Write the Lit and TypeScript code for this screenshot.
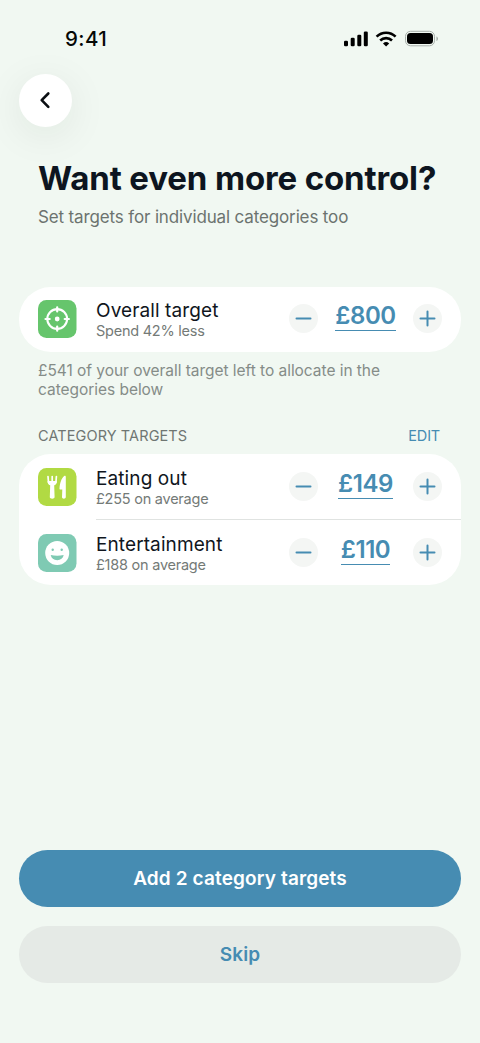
import { LitElement, html, css, svg } from "lit";
import { customElement, property } from "lit/decorators.js";

const targetIcon = svg`
  <g fill="none" stroke="#fff" stroke-linecap="round">
    <circle cx="19.2" cy="19" r="9.9" stroke-width="2.1"/>
    <path stroke-width="2.2" d="M19.2 7.3v4.2M19.2 26.5v4.2M7.5 19h4.2M26.7 19h4.2"/>
  </g>
  <circle cx="19.2" cy="19" r="2.4" fill="#fff"/>`;

const cutleryIcon = svg`
  <path fill="none" stroke="#fff" stroke-width="1.7" stroke-linecap="round" d="M10 8.5l.5 6M14.200 8.500v6M18.400 8.500l-.5 6"/>
  <path fill="#fff" d="M9.600 13h9.200l-.1 1.200c-.2 1.700-1.200 2.700-2.500 3.100l.4 11.700c.1 2.200-4.900 2.200-4.800 0l.4-11.700c-1.300-.4-2.300-1.400-2.500-3.100z"/>
  <path fill="#fff" d="M26.200 7.900c.8-.5 1.600-.1 1.600.9V29.100c0 2.100-3.900 2.100-3.800 0l.3-7.600h-1.700c-.9 0-1.200-.5-1.100-1.300.4-5 1.800-10 4.700-12.300z"/>`;

const smileIcon = svg`
  <circle cx="19.2" cy="19" r="12" fill="#fff"/>
  <circle cx="14.7" cy="15.7" r="1.2" fill="#7fcab3"/>
  <circle cx="23.700" cy="15.700" r="1.200" fill="#7fcab3"/>
  <path fill="#7fcab3" d="M12.700 21.100c4.300.8 8.700.8 13 0-.6 3.300-3.100 5.200-6.500 5.200s-5.900-1.900-6.500-5.200z"/>`;

const icons: Record<string, { art: unknown; fill: string }> = {
  target: { art: targetIcon, fill: "#66c56c" },
  eating: { art: cutleryIcon, fill: "#b1da43" },
  fun: { art: smileIcon, fill: "#7fcab3" },
};

@customElement("target-row")
class TargetRow extends LitElement {
  @property() icon = "target";
  @property() name = "";
  @property() detail = "";
  @property() amount = "";

  static styles = css`
    :host { display: grid; grid-template-columns: 58px 1fr 153px; height: 65px; padding: 0 19px; box-sizing: border-box; }
    .icon { width: 38.5px; height: 38px; margin-top: 13px; display: block; }
    .copy { padding-top: 12px; }
    .name { font-size: 19px; line-height: 24px; color: #10161d; white-space: nowrap; letter-spacing: .1px; }
    .detail { font-size: 14.5px; line-height: 15.5px; color: #747a77; white-space: nowrap; letter-spacing: -.24px; }
    .stepper { display: grid; grid-template-columns: 29px 1fr 29px; }
    .round { width: 29px; height: 29px; margin-top: 17px; border: 0; padding: 0; border-radius: 50%; background: #f4f6f4; display: block; }
    .round svg { display: block; }
    .value { justify-self: center; align-self: start; margin-top: 14px; height: 29px; line-height: 29px; border-bottom: 1.5px solid #468cb2; color: #468cb2; font-size: 24px; font-weight: 600; letter-spacing: -.4px; }
  `;

  render() {
    const i = icons[this.icon];
    const sign = (d: string) => html`<button class="round"><svg width="29" height="29" viewBox="0 0 29 29"><path d=${d} stroke="#468cb2" stroke-width="2" stroke-linecap="round"/></svg></button>`;
    return html`
      <svg class="icon" viewBox="0 0 38.5 38"><rect width="38.5" height="38" rx="8.5" fill=${i.fill}/>${i.art}</svg>
      <div class="copy">
        <div class="name">${this.name}</div>
        <div class="detail">${this.detail}</div>
      </div>
      <div class="stepper">
        ${sign("M7.5 14.5h14")}
        <span class="value">${this.amount}</span>
        ${sign("M7.5 14.5h14M14.5 7.5v14")}
      </div>`;
  }
}

@customElement("app-root")
class AppRoot extends LitElement {
  static styles = css`
    :host { display: flex; flex-direction: column; height: 1043px; box-sizing: border-box; padding: 0 19px 60px; background: #f1f8f2; font-family: Inter, "Liberation Sans", sans-serif; overflow: hidden; }
    .status { display: flex; justify-content: space-between; align-items: center; height: 74px; padding: 3px 22px 0 46px; box-sizing: border-box; }
    .time { font-size: 20.5px; font-weight: 500; letter-spacing: .4px; color: #050806; }
    .back { width: 53px; height: 53px; border: 0; padding: 0; border-radius: 50%; background: #fff; box-shadow: 0 8px 40px rgba(20, 40, 30, .08); flex: none; }
    .back svg { display: block; }
    h1 { margin: 30px 0 0 19px; font-size: 33px; line-height: 42px; font-weight: 700; letter-spacing: -.13px; color: #0d1520; white-space: nowrap; }
    .lead { margin: 7px 0 0 19px; font-size: 17px; line-height: 22px; letter-spacing: -.14px; color: #6c736f; white-space: nowrap; }
    .card { background: #fff; border-radius: 32px; overflow: hidden; }
    .overall { margin-top: 59px; }
    .note { margin: 9px 0 0 19px; font-size: 15.5px; line-height: 19.3px; letter-spacing: -.04px; color: #858c88; white-space: nowrap; }
    .heading { display: flex; justify-content: space-between; margin: 26px 21px 0 19px; font-size: 14.5px; line-height: 20px; letter-spacing: .1px; color: #6f7672; }
    .edit { color: #468cb2; letter-spacing: -.2px; }
    .list { margin-top: 8.5px; padding-top: 1px; }
    .list .first { height: 64px; }
    .rule { height: 1px; margin-left: 77px; background: #e0e3e1; }
    .list .last { height: 65px; padding-top: 1px; }
    .actions { margin-top: auto; display: grid; gap: 19px; }
    .action { height: 57px; border: 0; border-radius: 28.5px; font: 600 19px/57px Inter, "Liberation Sans", sans-serif; letter-spacing: .13px; padding: 0; background: #468cb2; color: #fff; }
    .action.skip { background: #e5eae6; color: #468cb2; }
  `;

  render() {
    return html`
      <div class="status">
        <span class="time">9:41</span>
        <svg width="96" height="18" viewBox="0 0 96 18">
          <rect x="1" y="10.7" width="4" height="5.5" rx="1.3"/>
          <rect x="7.7" y="7.7" width="4" height="8.5" rx="1.3"/>
          <rect x="14.3" y="4.7" width="4" height="11.5" rx="1.3"/>
          <rect x="20.8" y="1.5" width="4" height="14.7" rx="1.3"/>
          <g fill="none" stroke="#000" stroke-width="2.6">
            <path d="M33.6 6.600a13.500 13.500 0 0 1 19 0"/>
            <path d="M37.200 10.500a8.400 8.400 0 0 1 11.800 0"/>
          </g>
          <path d="M43.100 16.600l-3.100-3.100a4.500 4.500 0 0 1 6.200 0z"/>
          <rect x="62.500" y="1.300" width="29" height="14.500" rx="5" fill="none" stroke="#a9b0ab"/>
          <rect x="64" y="3" width="26" height="11" rx="3.500"/>
          <path d="M93.500 6.500v4.500c1.900-.7 1.900-3.800 0-4.500z" fill="#a0a7a2"/>
        </svg>
      </div>
      <button class="back" aria-label="Back">
        <svg width="53" height="53" viewBox="0 0 53 53"><path d="M29.300 19.500L22.700 26.200l6.600 6.700" fill="none" stroke="#0b0f12" stroke-width="2.600" stroke-linecap="round" stroke-linejoin="round"/></svg>
      </button>
      <h1>Want even more control?</h1>
      <div class="lead">Set targets for individual categories too</div>
      <div class="card overall">
        <target-row icon="target" name="Overall target" detail="Spend 42% less" amount="£800"></target-row>
      </div>
      <div class="note">£541 of your overall target left to allocate in the<br>categories below</div>
      <div class="heading"><span>CATEGORY TARGETS</span><span class="edit">EDIT</span></div>
      <div class="card list">
        <target-row class="first" icon="eating" name="Eating out" detail="£255 on average" amount="£149"></target-row>
        <div class="rule"></div>
        <target-row class="last" icon="fun" name="Entertainment" detail="£188 on average" amount="£110"></target-row>
      </div>
      <div class="actions">
        <button class="action">Add 2 category targets</button>
        <button class="action skip">Skip</button>
      </div>`;
  }
}
